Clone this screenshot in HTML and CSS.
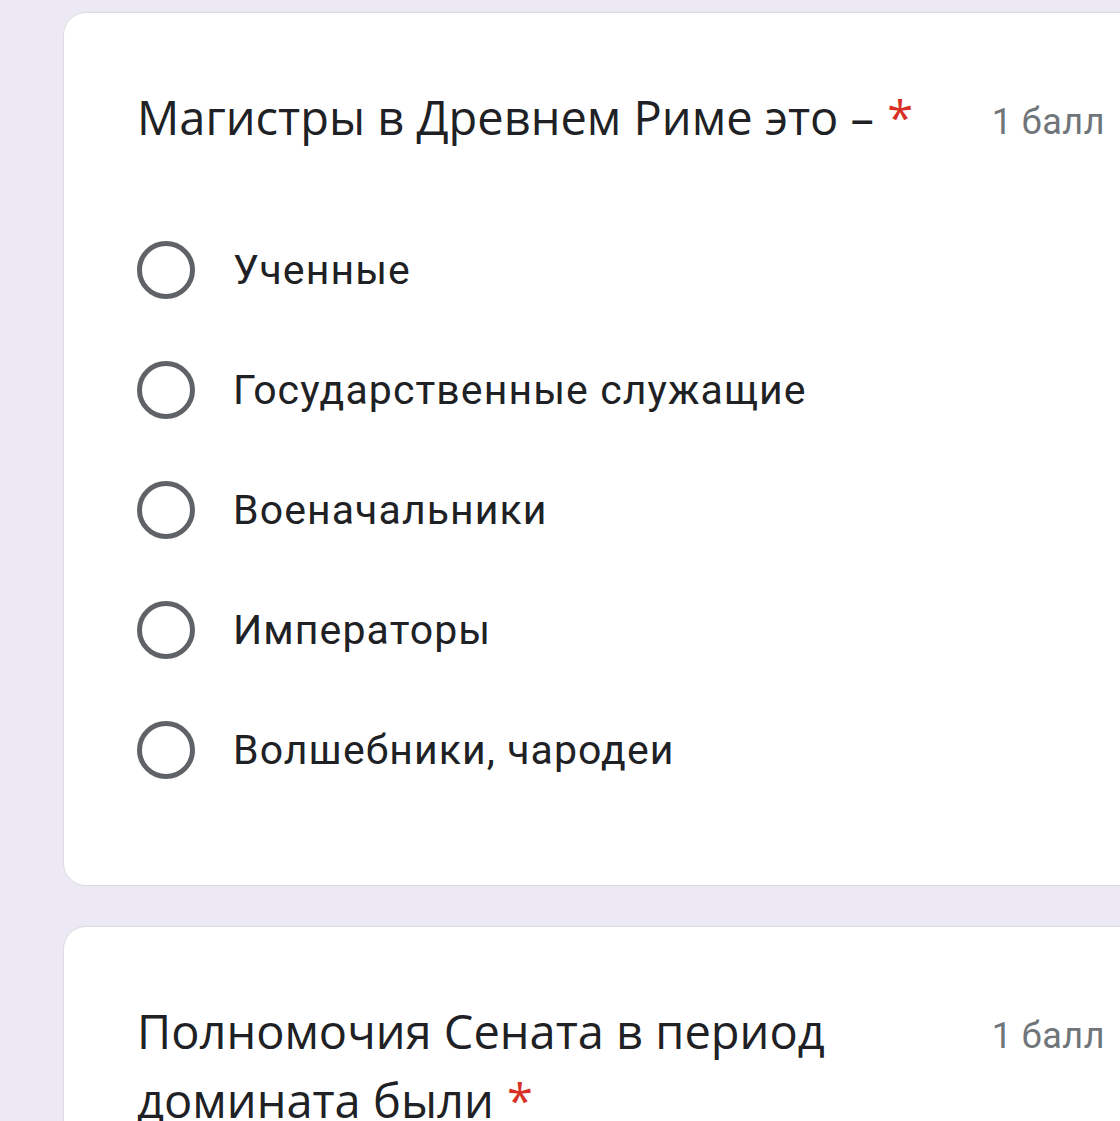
FILE: index.html
```html
<!DOCTYPE html>
<html lang="ru">
<head>
<meta charset="utf-8">
<title>Форма</title>
<link rel="stylesheet" href="styles.css">
</head>
<body>
<main class="page">
  <section class="card">
    <div class="q-head">
      <div class="q-title">Магистры в Древнем Риме это –<span class="req">*</span></div>
      <div class="q-points">1 балл</div>
    </div>
    <div class="options">
      <label class="option"><span class="radio"></span><span class="opt-text">Ученные</span></label>
      <label class="option"><span class="radio"></span><span class="opt-text">Государственные служащие</span></label>
      <label class="option"><span class="radio"></span><span class="opt-text">Военачальники</span></label>
      <label class="option"><span class="radio"></span><span class="opt-text">Императоры</span></label>
      <label class="option"><span class="radio"></span><span class="opt-text">Волшебники, чародеи</span></label>
    </div>
  </section>
  <section class="card">
    <div class="q-head">
      <div class="q-title q-title-narrow">Полномочия Сената в период домината были<span class="req">*</span></div>
      <div class="q-points">1 балл</div>
    </div>
  </section>
</main>
</body>
</html>
```
FILE: styles.css
```css
html, body {
  margin: 0;
  padding: 0;
  background: #ece9f5;
  overflow: hidden;
  height: 100%;
}
body {
  font-family: Roboto, "Liberation Sans", sans-serif;
  color: #202124;
}
.page {
  display: flex;
  flex-direction: column;
  gap: 40px;
  padding: 12px 0 0 63px;
  width: 1112px;
}
.card {
  background: #fff;
  border: 1.5px solid #dadce0;
  border-radius: 23px;
  padding: 70px 69px 75px 73px;
}
.q-head {
  display: flex;
  justify-content: space-between;
  align-items: flex-start;
  gap: 40px;
}
.q-title {
  font-family: "Open Sans", Roboto, sans-serif;
  font-size: 47px;
  line-height: 69px;
  color: #202124;
}
.q-title-narrow {
  max-width: 720px;
}
.req {
  color: #d93025;
  padding-left: 0.28em;
}
.q-points {
  font-size: 36px;
  line-height: 60px;
  padding-top: 9px;
  color: #70757a;
  letter-spacing: 0.5px;
  white-space: nowrap;
}
.options {
  display: flex;
  flex-direction: column;
  margin-top: 58px;
}
.option {
  display: flex;
  align-items: center;
  height: 120px;
}
.radio {
  box-sizing: border-box;
  width: 58px;
  height: 58px;
  border: 5.5px solid #5f6368;
  border-radius: 50%;
  flex: none;
  margin-right: 38px;
}
.opt-text {
  font-size: 41px;
  letter-spacing: 1.1px;
  color: #202124;
}
```
